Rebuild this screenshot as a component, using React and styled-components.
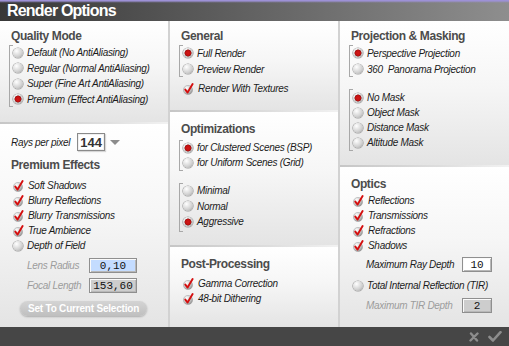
import React from 'react'
import styled, { createGlobalStyle } from 'styled-components'

const GlobalStyle = createGlobalStyle`
  html, body { margin: 0; padding: 0; background: #444; }
  body { font-family: "Liberation Sans", Arial, sans-serif; }
`

const Window = styled.div`
  width: 509px;
  height: 346px;
  display: flex;
  flex-direction: column;
  overflow: hidden;
  background: #e4e4e4;
`

const TitleBar = styled.div`
  height: 21px;
  flex: none;
  box-sizing: border-box;
  padding-left: 7px;
  display: flex;
  align-items: center;
  background:
    linear-gradient(to bottom, #9d91d6 0, #9d91d6 1px, rgba(157,145,214,0.35) 2px, transparent 3px),
    linear-gradient(to right, #383838 0%, #5a5a5a 40%, #8e8e8e 100%);
  color: #fff;
  font-weight: bold;
  font-size: 16px;
  letter-spacing: -0.8px;
`

const Columns = styled.div`
  flex: 1;
  display: grid;
  grid-template-columns: 168px 170px 171px;
  min-height: 0;
`

const Column = styled.div`
  display: flex;
  flex-direction: column;
  min-height: 0;
  & + & {
    border-left: 2px solid #d2d2d2;
  }
`

const Panel = styled.div`
  box-sizing: border-box;
  height: ${p => p.$h}px;
  flex: ${p => (p.$h ? 'none' : '1')};
  padding: ${p => p.$pt || 8}px 6px 0 9px;
  background: linear-gradient(to bottom, #ffffff 0%, #f6f6f6 45%, #e4e4e4 100%);
  & + & {
    border-top: 2px solid #d4d4d4;
    border-image: linear-gradient(to right, #c6c6c6, #dedede 60%, #f2f2f2) 1;
  }
`

const Header = styled.div`
  margin: 0 0 ${p => p.$mb || 0}px 2px;
  height: 15px;
  line-height: 15px;
  font-size: 12px;
  font-weight: bold;
  letter-spacing: -0.4px;
  color: #4c4c4c;
`

const Group = styled.div`
  position: relative;
  margin-top: ${p => p.$mt || 0}px;
  padding: ${p => p.$pt || 0}px 0 ${p => p.$pb || 0}px 3px;
  border-left: 1px solid #a8a8a8;
  &::before, &::after {
    content: '';
    position: absolute;
    left: 0;
    width: 3px;
    border-top: 1px solid #a8a8a8;
  }
  &::before { top: 0; }
  &::after { bottom: 0; }
`

const Row = styled.div`
  display: flex;
  align-items: center;
  gap: 4px;
  height: ${p => p.$h || 15}px;
  margin-top: ${p => p.$mt || 0}px;
  padding-left: ${p => p.$pl || 0}px;
`

const Text = styled.span`
  font-size: 10px;
  font-style: italic;
  letter-spacing: -0.3px;
  color: ${p => (p.$dim ? '#9c9c9c' : '#1c1c1c')};
  white-space: nowrap;
`

const Radio = styled.span`
  flex: none;
  width: 10px;
  height: 10px;
  border-radius: 50%;
  box-shadow: 0 0 0 0.6px #9a9a9a;
  background: ${p =>
    p.$on
      ? 'radial-gradient(circle at 50% 50%, #d51818 0, #c01010 2.6px, #8a1c1c 3.2px, transparent 3.8px), radial-gradient(circle at 35% 30%, #ffffff, #c4c4c4 65%, #909090)'
      : 'radial-gradient(circle at 35% 30%, #ffffff, #cfcfcf 60%, #929292)'};
`

const CheckIcon = () => (
  <svg width="11" height="12" viewBox="0 0 11 12" style={{ flex: 'none' }}>
    <defs>
      <radialGradient id="chk-ball" cx="0.35" cy="0.3" r="0.75">
        <stop offset="0" stopColor="#ffffff" />
        <stop offset="0.6" stopColor="#c8c8c8" />
        <stop offset="1" stopColor="#8e8e8e" />
      </radialGradient>
    </defs>
    <circle cx="5" cy="7" r="4.6" fill="url(#chk-ball)" stroke="#9c9c9c" strokeWidth="0.5" />
    <path d="M2.3 6.6 L4.6 9.6 L9.6 1" fill="none" stroke="#d40f0f" strokeWidth="1.9" strokeLinecap="round" strokeLinejoin="round" />
  </svg>
)

const Item = ({ type, on, children, ...rest }) => (
  <Row {...rest}>
    {type === 'check' ? <CheckIcon /> : <Radio $on={on} />}
    <Text>{children}</Text>
  </Row>
)

const RaysRow = styled.div`
  display: flex;
  align-items: center;
  height: 18px;
  padding-left: 2px;
  margin-bottom: 7px;
`

const RaysBox = styled.div`
  margin-left: 7px;
  width: 28px;
  height: 18px;
  box-sizing: border-box;
  border: 1px solid #8a8a8a;
  box-shadow: inset 0 0 0 1px #f0f0f0, 1px 1px 1px rgba(0,0,0,0.15);
  background: #fff;
  display: flex;
  align-items: center;
  justify-content: center;
  font-size: 13px;
  font-weight: bold;
  color: #333;
`

const Caret = styled.span`
  margin-left: 5px;
  width: 0;
  height: 0;
  border-left: 5px solid transparent;
  border-right: 5px solid transparent;
  border-top: 5px solid #8c8c8c;
`

const FieldRow = styled.div`
  display: flex;
  align-items: center;
  height: 15px;
  margin-top: ${p => p.$mt || 0}px;
  padding-left: ${p => p.$pl || 0}px;
`

const FieldLabel = styled(Text)`
  width: ${p => p.$w}px;
  flex: none;
`

const NumBox = styled.div`
  box-sizing: border-box;
  width: ${p => p.$w}px;
  height: 15px;
  border: 1px solid #8f8f8f;
  box-shadow: inset 1px 1px 0 #fafafa, inset -1px -1px 0 #b8b8b8;
  background: ${p => p.$bg};
  display: flex;
  align-items: center;
  justify-content: center;
  font-family: "Liberation Mono", "DejaVu Sans Mono", monospace;
  font-size: 11px;
  color: #111;
`

const Button = styled.div`
  margin: 8px 0 0 11px;
  width: 127px;
  height: 15px;
  border-radius: 8px;
  background: linear-gradient(to bottom, #d4d4d4, #bfbfbf);
  box-shadow: 0 1px 2px rgba(0,0,0,0.25);
  display: flex;
  align-items: center;
  justify-content: center;
  color: #fff;
  font-size: 10px;
  font-weight: bold;
  letter-spacing: -0.2px;
  white-space: nowrap;
`

const Footer = styled.div`
  height: 19px;
  flex: none;
  background: #464646;
  display: flex;
  align-items: center;
  justify-content: flex-end;
  gap: 9px;
  padding-right: 7px;
`

const CloseIcon = () => (
  <svg width="10" height="10" viewBox="0 0 10 10">
    <path d="M2 1.5 L8 8.5 M8.5 1.5 L1.5 8.5" stroke="#8d8d8d" strokeWidth="2.4" strokeLinecap="round" />
  </svg>
)

const OkIcon = () => (
  <svg width="14" height="11" viewBox="0 0 14 11">
    <path d="M1.5 6 L5 9.5 L12.5 1.2" fill="none" stroke="#8d8d8d" strokeWidth="2.6" strokeLinecap="round" strokeLinejoin="round" />
  </svg>
)

export default function App() {
  return (
    <Window>
      <GlobalStyle />
      <TitleBar>Render Options</TitleBar>
      <Columns>
        <Column>
          <Panel $h={101}>
            <Header $mb={1}>Quality Mode</Header>
            <Group>
              <Item h={15.5} $h={15.5}>Default (No AntiAliasing)</Item>
              <Item $h={15.5}>Regular (Normal AntiAliasing)</Item>
              <Item $h={15.5}>Super (Fine Art AntiAliasing)</Item>
              <Item $h={15.5} on>Premium (Effect AntiAliasing)</Item>
            </Group>
          </Panel>
          <Panel $pt={9}>
            <RaysRow>
              <Text>Rays per pixel</Text>
              <RaysBox>144</RaysBox>
              <Caret />
            </RaysRow>
            <Header $mb={5}>Premium Effects</Header>
            <Item type="check" $pl={4}>Soft Shadows</Item>
            <Item type="check" $pl={4}>Blurry Reflections</Item>
            <Item type="check" $pl={4}>Blurry Transmissions</Item>
            <Item type="check" $pl={4}>True Ambience</Item>
            <Item $pl={4}>Depth of Field</Item>
            <FieldRow $mt={5} $pl={18}>
              <FieldLabel $w={62} $dim>Lens Radius</FieldLabel>
              <NumBox $w={48} $bg="#c4dcff">0,10</NumBox>
            </FieldRow>
            <FieldRow $mt={5} $pl={18}>
              <FieldLabel $w={62} $dim>Focal Length</FieldLabel>
              <NumBox $w={48} $bg="#cdcdcd">153,60</NumBox>
            </FieldRow>
            <Button>Set To Current Selection</Button>
          </Panel>
        </Column>

        <Column>
          <Panel $h={89}>
            <Header $mb={1}>General</Header>
            <Group>
              <Item $h={16} on>Full Render</Item>
              <Item $h={16}>Preview Render</Item>
            </Group>
            <Item type="check" $pl={4} $mt={4}>Render With Textures</Item>
          </Panel>
          <Panel $h={135} $pt={10}>
            <Header $mb={3}>Optimizations</Header>
            <Group $pb={1}>
              <Item on>for Clustered Scenes (BSP)</Item>
              <Item>for Uniform Scenes (Grid)</Item>
            </Group>
            <Group $mt={12} $pb={2}>
              <Item $h={15.5}>Minimal</Item>
              <Item $h={15.5}>Normal</Item>
              <Item $h={15.5} on>Aggressive</Item>
            </Group>
          </Panel>
          <Panel $pt={10}>
            <Header $mb={4}>Post-Processing</Header>
            <Item type="check" $pl={4}>Gamma Correction</Item>
            <Item type="check" $pl={4}>48-bit Dithering</Item>
          </Panel>
        </Column>

        <Column>
          <Panel $h={144}>
            <Header $mb={1}>Projection &amp; Masking</Header>
            <Group>
              <Item $h={16} on>Perspective Projection</Item>
              <Item $h={16}>360&nbsp; Panorama Projection</Item>
            </Group>
            <Group $mt={12} $pt={1} $pb={1}>
              <Item on>No Mask</Item>
              <Item>Object Mask</Item>
              <Item>Distance Mask</Item>
              <Item>Altitude Mask</Item>
            </Group>
          </Panel>
          <Panel $pt={10}>
            <Header $mb={1}>Optics</Header>
            <Item type="check" $pl={4}>Reflections</Item>
            <Item type="check" $pl={4}>Transmissions</Item>
            <Item type="check" $pl={4}>Refractions</Item>
            <Item type="check" $pl={4}>Shadows</Item>
            <FieldRow $mt={4} $pl={17}>
              <FieldLabel $w={96}>Maximum Ray Depth</FieldLabel>
              <NumBox $w={30} $bg="#ffffff">10</NumBox>
            </FieldRow>
            <Item $pl={4} $mt={6}>Total Internal Reflection (TIR)</Item>
            <FieldRow $mt={5} $pl={17}>
              <FieldLabel $w={96} $dim>Maximum TIR Depth</FieldLabel>
              <NumBox $w={30} $bg="#cdcdcd">2</NumBox>
            </FieldRow>
          </Panel>
        </Column>
      </Columns>
      <Footer>
        <CloseIcon />
        <OkIcon />
      </Footer>
    </Window>
  )
}
